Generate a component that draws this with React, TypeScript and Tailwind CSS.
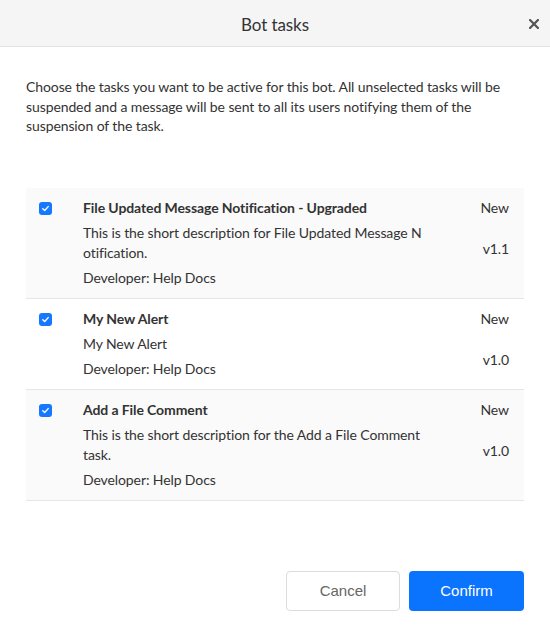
import React from "react";

const tasks = [
  {
    title: "File Updated Message Notification - Upgraded",
    desc: "This is the short description for File Updated Message Notification.",
    version: "v1.1",
    shaded: true,
  },
  {
    title: "My New Alert",
    desc: "My New Alert",
    version: "v1.0",
    shaded: false,
  },
  {
    title: "Add a File Comment",
    desc: "This is the short description for the Add a File Comment task.",
    version: "v1.0",
    shaded: true,
  },
];

function Check() {
  return (
    <div className="mt-[4px] flex h-[13px] w-[13px] items-center justify-center rounded-[3px] bg-[#1677ff]">
      <svg width="9" height="9" viewBox="0 0 10 10">
        <path d="M2 5.2 L4.1 7.2 L8 2.9" fill="none" stroke="white" strokeWidth="1.6" strokeLinecap="round" strokeLinejoin="round" />
      </svg>
    </div>
  );
}

export default function App() {
  return (
    <div className="flex h-[639px] w-[550px] flex-col bg-white tracking-[-0.1px] text-[#333]" style={{ fontFamily: "Lato, 'Noto Sans', sans-serif" }}>
      <div className="relative flex h-[47px] shrink-0 items-center justify-center border-b border-[#e4e4e4] bg-[#f5f5f5]">
        <span className="pt-[3px] text-[17px] text-[#333]">Bot tasks</span>
        <button className="absolute right-[11px] top-[19px] flex h-[10px] w-[10px] items-center justify-center">
          <svg width="10" height="10" viewBox="0 0 10 10">
            <path d="M1 1 L9 9 M9 1 L1 9" stroke="#555" strokeWidth="2.2" strokeLinecap="square" />
          </svg>
        </button>
      </div>
      <div className="px-[26px] pt-[30px]">
        <p className="text-[14px] leading-[19.5px] text-[#333]">
          Choose the tasks you want to be active for this bot. All unselected tasks will be suspended and a message will be sent to all its users notifying them of the suspension of the task.
        </p>
        <div className="mt-[52px]">
          {tasks.map((t, i) => (
            <div
              key={i}
              className={`flex border-b border-[#e6e6e6] pl-[13px] pr-[15px] pt-[10px] ${t.shaded ? "bg-[#fafafa]" : "bg-white"} ${i === 1 ? "h-[91px]" : "h-[111px]"}`}
            >
              <div className="w-[44px] shrink-0">
                <Check />
              </div>
              <div className="w-[340px] shrink-0 text-[14px] leading-[20px]">
                <div className="font-bold text-[#333]">{t.title}</div>
                <div className="mt-[5px] break-all text-[#333]">{t.desc}</div>
                <div className="mt-[5px] text-[#333]">Developer: Help Docs</div>
              </div>
              <div className="flex flex-1 flex-col items-end text-[14px] leading-[20px] text-[#333]">
                <div>New</div>
                <div className="mt-[21px]">{t.version}</div>
              </div>
            </div>
          ))}
        </div>
      </div>
      <div className="mt-auto mb-[28px] flex justify-end gap-[9px] px-[26px] tracking-normal">
        <button
          className="h-[40px] w-[114px] rounded-[4px] border border-[#dcdcdc] bg-white text-[15px] text-[#666]"
          style={{ fontFamily: "'Liberation Sans', Arial, sans-serif" }}
        >
          Cancel
        </button>
        <button
          className="h-[40px] w-[115px] rounded-[4px] bg-[#0a74ff] text-[15px] text-white"
          style={{ fontFamily: "'Liberation Sans', Arial, sans-serif" }}
        >
          Confirm
        </button>
      </div>
    </div>
  );
}
